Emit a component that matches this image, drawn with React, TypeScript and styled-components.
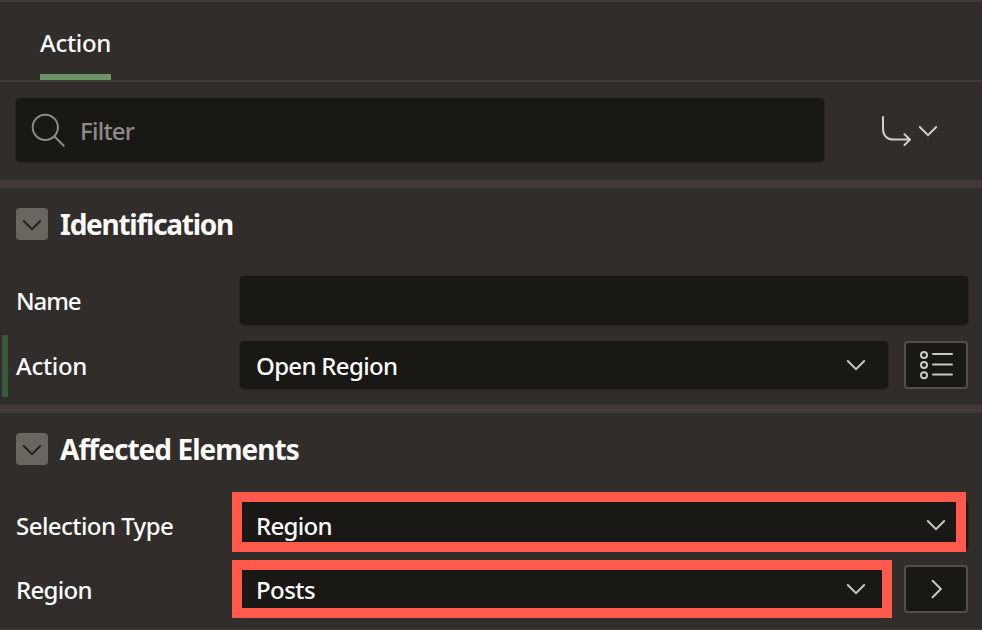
import React from "react";
import styled, { createGlobalStyle } from "styled-components";

const GlobalStyle = createGlobalStyle`
  * { box-sizing: border-box; }
  body {
    margin: 0;
    background: #312d2a;
    color: #fcfbfa;
    font-family: "Noto Sans", "Open Sans", sans-serif;
    font-size: 24px;
    font-weight: 500;
    overflow: hidden;
  }
`;

const Panel = styled.main`
  width: 982px;
  height: 630px;
  display: flex;
  flex-direction: column;
  background: #312d2a;
  border-top: 2px solid #403b38;
  border-bottom: 1px solid #403b3a;
`;

const TabBar = styled.nav`
  display: flex;
  height: 80px;
  flex: none;
  padding-left: 40px;
  border-bottom: 2px solid #403b38;
`;

const Tab = styled.div`
  width: 71px;
  height: 78px;
  line-height: 82px;
  border-bottom: 6px solid #6b9467;
  white-space: nowrap;
`;

const Toolbar = styled.div`
  display: flex;
  align-items: center;
  height: 98px;
  flex: none;
  padding: 0 44px 2px 16px;
  justify-content: space-between;
`;

const Filter = styled.div`
  display: flex;
  align-items: center;
  width: 808px;
  height: 64px;
  padding-left: 15px;
  gap: 15px;
  background: #191815;
  border-radius: 4px;
  color: #8d8a87;
  box-shadow: 0 1px 2px #2a2421;
`;

const Goto = styled.div`
  display: flex;
  align-items: center;
  gap: 7px;
  padding-top: 2px;
  color: #d0cecc;
`;

const Section = styled.section<{ $height: number }>`
  height: ${(p) => p.$height}px;
  flex: none;
  border-top: 8px solid #403b38;
  padding: 20px 14px 0 16px;
`;

const SectionHeader = styled.header`
  display: flex;
  align-items: center;
  gap: 12px;
  height: 32px;
`;

const Toggle = styled.span`
  display: flex;
  align-items: center;
  justify-content: center;
  width: 32px;
  height: 32px;
  padding-top: 2px;
  border-radius: 4px;
  background: #6a655e;
  color: #24211f;
`;

const Title = styled.h2`
  margin: 0;
  font-size: 28px;
  line-height: 32px;
  font-weight: 700;
  white-space: nowrap;
`;

const Fields = styled.div`
  display: flex;
  flex-direction: column;
  gap: 16px;
  margin-top: 36px;
`;

const Row = styled.div`
  position: relative;
  display: grid;
  grid-template-columns: 208px 1fr auto;
  column-gap: 16px;
  align-items: start;
`;

const ChangedMark = styled.i`
  position: absolute;
  left: -14px;
  top: -6px;
  width: 6px;
  height: 62px;
  background: #39593f;
`;

const Label = styled.span`
  height: 48px;
  line-height: 50px;
  white-space: nowrap;
`;

const Field = styled.div<{ $height?: number; $wide?: boolean }>`
  position: relative;
  display: flex;
  justify-content: space-between;
  grid-column: ${(p) => (p.$wide ? "2 / 4" : "2")};
  height: ${(p) => p.$height ?? 48}px;
  padding: 0 22px 0 16px;
  background: #191815;
  border-radius: 4px;
  box-shadow: 0 1px 2px #2a2421;
  line-height: 50px;

  svg {
    align-self: center;
  }
`;

const IconButton = styled.button`
  display: flex;
  align-items: center;
  justify-content: center;
  width: 64px;
  height: 48px;
  padding: 0;
  border: 2px solid #534e4a;
  border-radius: 4px;
  background: #191815;
  color: #c9c7c4;
`;

const Highlight = styled.span<{ $right: number; $top: number; $bottom: number }>`
  position: absolute;
  left: -8px;
  right: ${(p) => p.$right}px;
  top: ${(p) => p.$top}px;
  bottom: ${(p) => p.$bottom}px;
  border: 10px solid #ff5a4b;
`;

const Text = styled.span<{ $spacing: number }>`
  letter-spacing: ${(p) => p.$spacing}px;
  white-space: nowrap;
`;

const Icon = styled.svg`
  display: block;
  fill: none;
  stroke: currentColor;
  stroke-width: 2;
  stroke-linecap: round;
`;

const Chevron = ({ color }: { color?: string }) => (
  <Icon width="20" height="12" viewBox="0 0 20 12" color={color}>
    <path d="m1.8 2 8.2 8.2L18.2 2" />
  </Icon>
);

export default function App() {
  return (
    <>
      <GlobalStyle />
      <Panel>
        <TabBar>
          <Tab><Text $spacing={-0.3}>Action</Text></Tab>
        </TabBar>
        <Toolbar>
          <Filter>
            <Icon width="34" height="34" viewBox="0 0 34 34">
              <circle cx="14.3" cy="14.3" r="12.6" />
              <path d="m23.3 23.3 9.4 9.4" />
            </Icon>
            <Text $spacing={-0.75}>Filter</Text>
          </Filter>
          <Goto>
            <Icon width="30" height="32" viewBox="0 0 30 32">
              <path d="M2 2v11.5C2 20.5 6 24.6 13 24.6h15.5M23.5 19.2l5.4 5.4-5.4 5.4" />
            </Icon>
            <Chevron />
          </Goto>
        </Toolbar>
        <Section $height={225}>
          <SectionHeader>
            <Toggle><Chevron /></Toggle>
            <Title><Text $spacing={-1.26}>Identification</Text></Title>
          </SectionHeader>
          <Fields>
            <Row>
              <Label><Text $spacing={-1.1}>Name</Text></Label>
              <Field $wide $height={49} />
            </Row>
            <Row>
              <ChangedMark />
              <Label><Text $spacing={-0.3}>Action</Text></Label>
              <Field><Text $spacing={-0.68}>Open Region</Text><Chevron color="#c9c7c4" /></Field>
              <IconButton aria-label="Quick pick">
                <Icon width="34" height="30" viewBox="0 0 34 30">
                  <circle cx="5" cy="5" r="3" />
                  <circle cx="5" cy="15" r="3" />
                  <circle cx="5" cy="25.3" r="3" />
                  <path d="M14 4h19M14 14.4h19M14 24.5h19" />
                </Icon>
              </IconButton>
            </Row>
          </Fields>
        </Section>
        <Section $height={224}>
          <SectionHeader>
            <Toggle><Chevron /></Toggle>
            <Title><Text $spacing={-0.96}>Affected Elements</Text></Title>
          </SectionHeader>
          <Fields>
            <Row>
              <Label><Text $spacing={-0.55}>Selection Type</Text></Label>
              <Field $wide>
                <Text $spacing={-0.7}>Region</Text><Chevron color="#c9c7c4" />
                <Highlight $right={2} $top={-9} $bottom={-3} />
              </Field>
            </Row>
            <Row>
              <Label><Text $spacing={-0.7}>Region</Text></Label>
              <Field>
                <Text $spacing={-0.55}>Posts</Text><Chevron color="#c9c7c4" />
                <Highlight $right={-4} $top={-5} $bottom={-5} />
              </Field>
              <IconButton aria-label="Go to region">
                <Icon width="12" height="20" viewBox="0 0 12 20">
                  <path d="m2.6 1.8 8.2 8.2-8.2 8.2" />
                </Icon>
              </IconButton>
            </Row>
          </Fields>
        </Section>
      </Panel>
    </>
  );
}
